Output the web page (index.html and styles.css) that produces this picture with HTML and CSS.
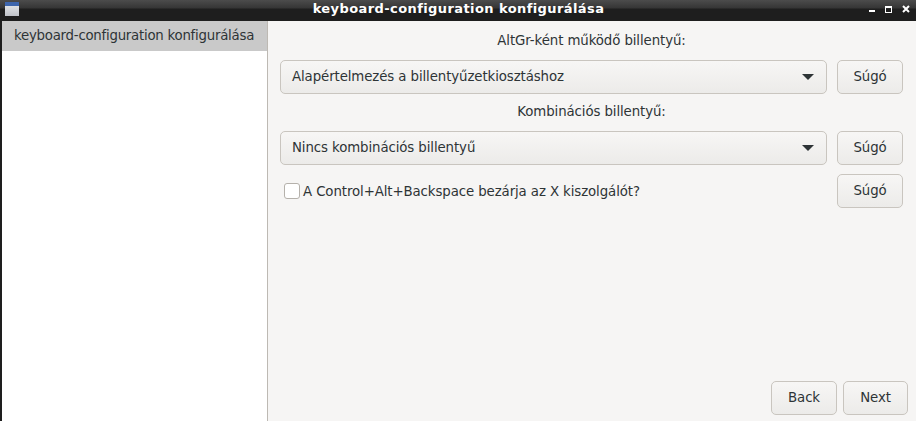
FILE: index.html
```html
<!DOCTYPE html>
<html lang="hu">

<head>
    <meta charset="UTF-8">
    <title>keyboard-configuration konfigurálása</title>
    <link rel="stylesheet" href="styles.css">
</head>

<body>
    <div class="titlebar">
        <div class="side">
            <svg width="14" height="14" viewBox="0 0 14 14">
                <defs>
                    <linearGradient id="iconBody" x1="0" y1="0" x2="0" y2="1">
                        <stop offset="0" stop-color="#eceef0" />
                        <stop offset="1" stop-color="#bfc2c8" />
                    </linearGradient>
                </defs>
                <rect width="14" height="14" fill="url(#iconBody)" />
                <rect width="14" height="4" fill="#3e66ad" />
            </svg>
        </div>
        <div class="title">keyboard-configuration konfigurálása</div>
        <div class="side side-right">
            <svg width="42" height="12" viewBox="0 0 42 12">
                <rect x="1" y="6" width="6" height="2" fill="#fff" />
                <rect x="17.5" y="2.5" width="6" height="6" fill="none" stroke="#fff" />
                <rect x="17" y="2" width="7" height="2" fill="#fff" />
                <path d="M35 2l6 6M41 2l-6 6" stroke="#fff" stroke-width="2" fill="none" />
            </svg>
        </div>
    </div>

    <div class="window">
        <div class="sidebar">
            <div class="step">keyboard-configuration konfigurálása</div>
        </div>

        <div class="content">
            <div class="field-label">AltGr-ként működő billentyű:</div>
            <div class="row">
                <div class="combo">
                    <span>Alapértelmezés a billentyűzetkiosztáshoz</span>
                    <span class="arrow"></span>
                </div>
                <button class="btn">Súgó</button>
            </div>

            <div class="field-label label-next">Kombinációs billentyű:</div>
            <div class="row">
                <div class="combo">
                    <span>Nincs kombinációs billentyű</span>
                    <span class="arrow"></span>
                </div>
                <button class="btn">Súgó</button>
            </div>

            <div class="row check-row">
                <label class="check">
                    <span class="box"></span>
                    <span>A Control+Alt+Backspace bezárja az X kiszolgálót?</span>
                </label>
                <button class="btn">Súgó</button>
            </div>

            <div class="footer">
                <button class="btn">Back</button>
                <button class="btn btn-next">Next</button>
            </div>
        </div>
    </div>
</body>

</html>
```

FILE: styles.css
```css
* {
    box-sizing: border-box;
}

html,
body {
    height: 100%;
}

body {
    margin: 0;
    display: flex;
    flex-direction: column;
    overflow: hidden;
    font-family: "DejaVu Sans", sans-serif;
    font-size: 13.33px;
    letter-spacing: -0.1px;
    color: #2e3436;
    background-color: #f6f5f4;
}

.titlebar {
    height: 21px;
    flex: none;
    display: flex;
    align-items: flex-start;
    padding: 2px 6px 0 5px;
    background: linear-gradient(#4c4c4c 0, #353535 8px, #1e1e1e 9px, #1e1e1e 100%);
}

.side {
    flex: 1;
    display: flex;
}

.side-right {
    justify-content: flex-end;
    padding-top: 2px;
}

.title {
    flex: none;
    margin-top: -1px;
    margin-left: 2px;
    font-size: 13px;
    font-weight: bold;
    letter-spacing: 0.41px;
    color: #fff;
}

.window {
    flex: 1;
    display: flex;
    min-height: 0;
    padding-left: 2px;
    background-color: #1e1e1e;
}

.sidebar {
    width: 266px;
    flex: none;
    background-color: #fff;
    border-right: 1px solid #bdb9b3;
}

.step {
    height: 30px;
    padding-left: 12px;
    letter-spacing: -0.25px;
    line-height: 30px;
    background-color: #c9c9c9;
}

.content {
    flex: 1;
    display: flex;
    flex-direction: column;
    padding: 0 8px 6px 12px;
    background-color: #f6f5f4;
}

.field-label {
    height: 18px;
    margin-top: 11px;
    margin-right: 5px;
    line-height: 18px;
    text-align: center;
}

.label-next {
    margin-top: 9px;
}

.row {
    display: flex;
    gap: 10px;
    margin-top: 10px;
    margin-right: 5px;
}

.combo {
    flex: 1;
    height: 34px;
    display: flex;
    align-items: center;
    justify-content: space-between;
    padding: 0 9px 2px 11px;
    border: 1px solid #c9c5bf;
    border-radius: 5px;
    background: linear-gradient(#f7f6f5, #ecebe9);
}

.arrow {
    width: 0;
    height: 0;
    margin-top: 2px;
    margin-right: 3px;
    border-left: 6px solid transparent;
    border-right: 6px solid transparent;
    border-top: 6px solid #2e3436;
}

.btn {
    width: 66px;
    height: 34px;
    padding: 0 0 2px;
    font: inherit;
    letter-spacing: inherit;
    color: inherit;
    border: 1px solid #c9c5bf;
    border-radius: 5px;
    background: linear-gradient(#f7f6f5, #ecebe9);
}

.btn-next {
    width: 65px;
}

.check-row {
    margin-top: 9px;
    justify-content: space-between;
}

.check {
    display: flex;
    align-items: center;
    gap: 3px;
    height: 34px;
    padding-left: 4px;
}

.box {
    width: 16px;
    height: 16px;
    border: 1px solid #b5b1ab;
    border-radius: 3px;
    background-color: #fff;
}

.footer {
    margin-top: auto;
    display: flex;
    justify-content: flex-end;
    gap: 6px;
}
```
